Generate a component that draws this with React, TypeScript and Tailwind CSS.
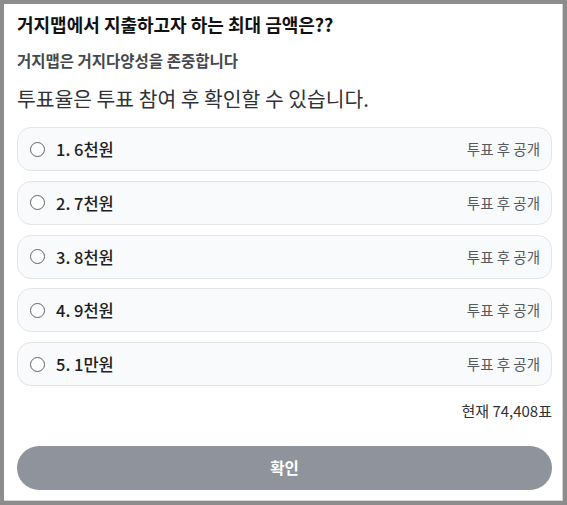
import React from "react";

const options = ["1. 6천원", "2. 7천원", "3. 8천원", "4. 9천원", "5. 1만원"];

function Option({ label }: { label: string }) {
  return (
    <label className="flex h-[44px] items-center rounded-[14px] border border-[#e3e5e9] bg-[#f9fafb] pl-[12px] pr-[11px] cursor-pointer">
      <span className="h-[15px] w-[15px] shrink-0 rounded-full border-[1.5px] border-[#5f6368] bg-white" />
      <span className="ml-[11px] text-[16.5px] font-medium leading-[22px] text-[#1f1f1f]">{label}</span>
      <span className="ml-auto text-[14.5px] leading-[20px] text-[#555a60]">투표 후 공개</span>
    </label>
  );
}

export default function App() {
  return (
    <div
      className="h-[505px] w-[567px] border-[4px] border-[#8c8c8c] bg-white"
      style={{ fontFamily: '"Noto Sans CJK KR", "Noto Sans", sans-serif' }}
    >
      <div className="flex h-full flex-col border-b border-r border-[#d6d6d6] pl-[13px] pr-[10px] pt-[8px]">
        <h1 className="text-[18px] font-bold leading-[24px] text-[#111]">
          거지맵에서 지출하고자 하는 최대 금액은??
        </h1>
        <p className="mt-[13px] text-[15.5px] font-semibold leading-[22px] text-[#45484d]">
          거지맵은 거지다양성을 존중합니다
        </p>
        <p className="mt-[13px] text-[20.4px] leading-[28px] text-[#2f3236]">
          투표율은 투표 참여 후 확인할 수 있습니다.
        </p>
        <div className="mt-[15px] flex flex-col gap-[9.75px]">
          {options.map((o) => (
            <Option key={o} label={o} />
          ))}
        </div>
        <div className="mt-[14px] text-right text-[15px] leading-[22px] text-[#2f3236]">
          현재 74,408표
        </div>
        <button className="mt-[24px] flex h-[44px] w-full items-center justify-center rounded-full bg-[#8f949c] text-[15.5px] font-bold text-white">
          확인
        </button>
      </div>
    </div>
  );
}
